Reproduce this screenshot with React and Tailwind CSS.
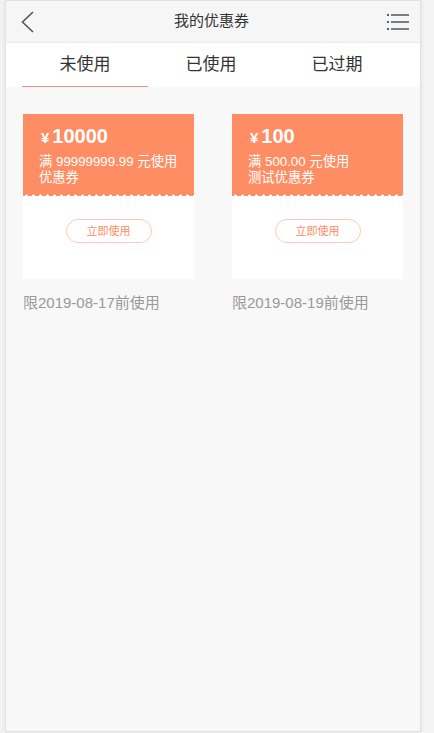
const coupons = [
  { amount: "10000", rule: "满 99999999.99 元使用", name: "优惠券", date: "限2019-08-17前使用" },
  { amount: "100", rule: "满 500.00 元使用", name: "测试优惠券", date: "限2019-08-19前使用" },
];

const tabs = ["未使用", "已使用", "已过期"];

function BackIcon() {
  return (
    <svg width="16" height="24" viewBox="0 0 16 24" fill="none">
      <path d="M13 2 L2.5 12 L13 22" stroke="#555" strokeWidth="1.6" />
    </svg>
  );
}

function MenuIcon() {
  return (
    <svg width="24" height="20" viewBox="0 0 24 20" fill="none">
      <rect x="0" y="2" width="2" height="2" fill="#5a5d6c" />
      <rect x="0" y="9" width="2" height="2" fill="#5a5d6c" />
      <rect x="0" y="16" width="2" height="2" fill="#5a5d6c" />
      <rect x="4" y="2.2" width="18" height="1.6" fill="#5a5d6c" />
      <rect x="4" y="9.2" width="18" height="1.6" fill="#5a5d6c" />
      <rect x="4" y="16.2" width="18" height="1.6" fill="#5a5d6c" />
    </svg>
  );
}

function CouponCard({ c }) {
  return (
    <div className="w-[171px]">
      <div className="bg-white">
        {/* orange top */}
        <div className="relative h-[82px] bg-[#ff8d64] pl-[16px] pt-[8px] text-white">
          <div className="flex items-baseline font-bold">
            <span className="ml-[2px] mr-[3px] text-[15px]">¥</span>
            <span className="text-[20px] leading-[28px]">{c.amount}</span>
          </div>
          <p className="mt-[4px] text-[13.3px] leading-[16px]">{c.rule}</p>
          <p className="text-[13.3px] leading-[16px]">{c.name}</p>
          <div className="absolute bottom-[-2px] left-0 right-0 h-[4px] bg-[radial-gradient(circle,white_1.4px,transparent_1.8px)] bg-size-[7px_4px] bg-repeat-x" />
        </div>
        {/* white bottom */}
        <div className="flex h-[83px] justify-center pt-[23px]">
          <button className="h-[24px] w-[86px] rounded-full border border-[#ffcab7] text-[11px] text-[#ff8d64]">
            立即使用
          </button>
        </div>
      </div>
      <p className="mt-[15px] text-[15px] leading-[18px] text-[#999]">{c.date}</p>
    </div>
  );
}

export default function App() {
  return (
    <div
      className="h-[733px] w-full overflow-hidden bg-[#f3f3f3]"
      style={{ fontFamily: '"Liberation Sans", "Noto Sans CJK SC", sans-serif' }}
    >
      <div className="ml-[5px] h-[732px] w-[416px] border border-[#e2e2e2] bg-[#f8f8f8] shadow-[0_0_5px_rgba(0,0,0,0.08)]">
        {/* header */}
        <div className="flex h-[42px] items-center justify-between border-b border-[#ececec] bg-[#f6f6f6] pl-[14px] pr-[9px]">
          <BackIcon />
          <h1 className="text-[15px] text-[#333]">我的优惠券</h1>
          <MenuIcon />
        </div>

        {/* tabs */}
        <div className="flex h-[44px] bg-white pl-[16px] pr-[20px]">
          {tabs.map((t, i) => (
            <div
              key={t}
              className={`flex flex-1 items-center justify-center text-[17px] text-[#333] ${
                i === 0 ? "border-b border-[#f88c8c]" : ""
              }`}
            >
              {t}
            </div>
          ))}
        </div>

        {/* coupon list */}
        <div className="flex gap-[38px] px-[17px] pt-[27px]">
          {coupons.map((c) => (
            <CouponCard key={c.amount} c={c} />
          ))}
        </div>
      </div>
    </div>
  );
}
